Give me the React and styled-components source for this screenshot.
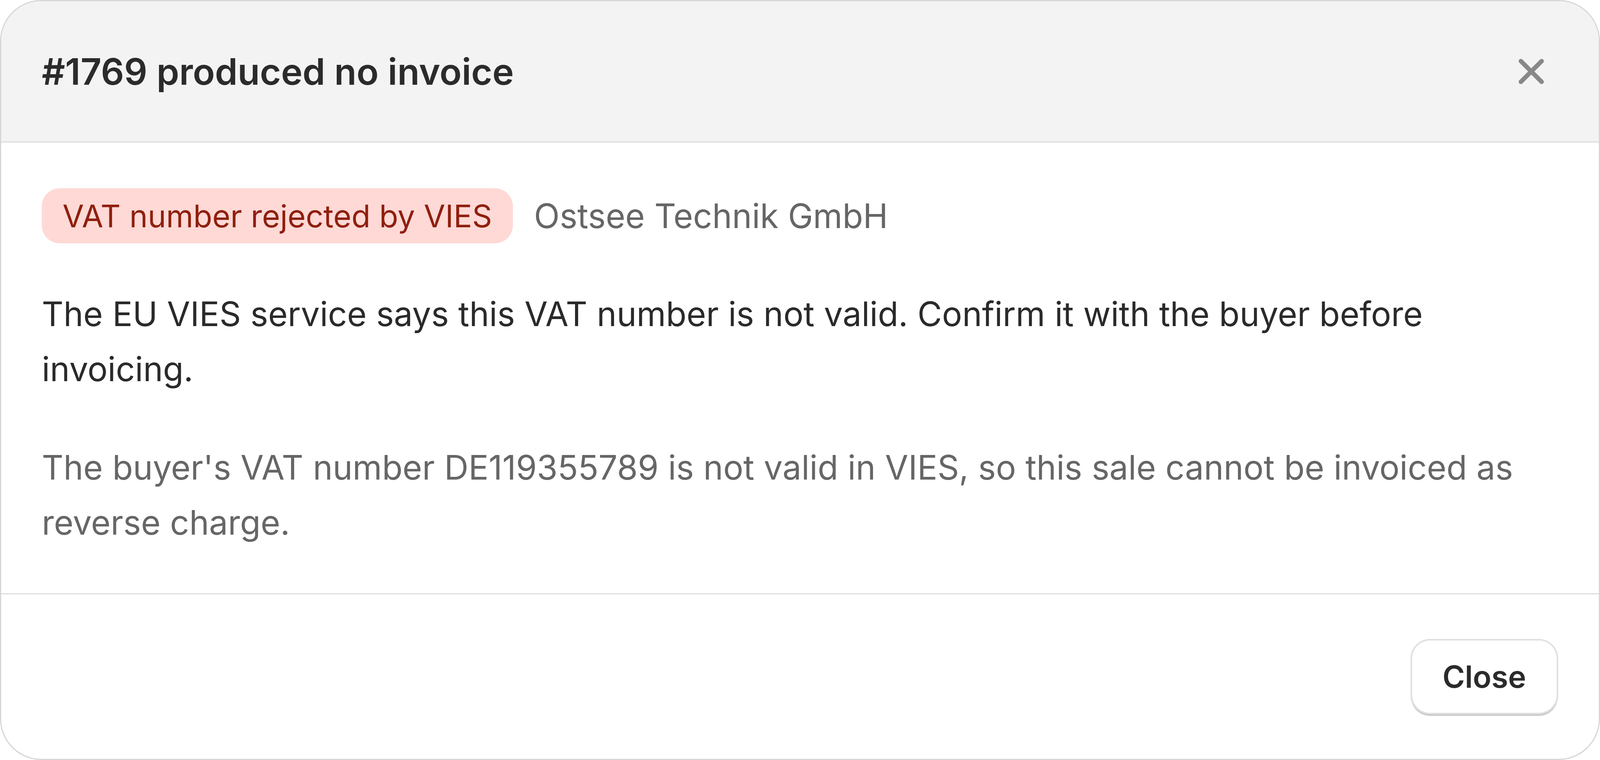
import React from 'react'
import styled, { createGlobalStyle } from 'styled-components'
import { X } from 'lucide-react'

const GlobalStyle = createGlobalStyle`
  html, body {
    margin: 0;
    padding: 0;
    height: 100%;
    background: #ffffff;
  }
  body {
    font-family: Inter, "Noto Sans", "Liberation Sans", sans-serif;
    color: #2b2b2b;
  }
  * {
    box-sizing: border-box;
  }
`

const Modal = styled.div`
  width: 100%;
  height: 100vh;
  display: flex;
  flex-direction: column;
  border: 3px solid #d6d6d6;
  border-radius: 106px;
  overflow: hidden;
  background: #ffffff;
`

const Header = styled.header`
  height: 362px;
  flex-shrink: 0;
  display: flex;
  align-items: center;
  justify-content: space-between;
  padding: 0 104px;
  background: #f3f3f3;
  border-bottom: 3px solid #dedede;
`

const Title = styled.h1`
  margin: 0;
  font-size: 93px;
  font-weight: 600;
  color: #2b2b2b;
`

const IconButton = styled.button`
  display: flex;
  align-items: center;
  justify-content: center;
  padding: 8px;
  margin-right: 8px;
  border: none;
  background: transparent;
  color: #888888;
  cursor: pointer;
`

const Body = styled.section`
  flex: 1;
  display: flex;
  flex-direction: column;
  gap: 111px;
  padding: 117px 104px 0;
  border-bottom: 3px solid #dedede;
`

const TagRow = styled.div`
  display: flex;
  align-items: center;
  gap: 54px;
`

const Badge = styled.span`
  display: inline-flex;
  align-items: center;
  height: 141px;
  padding: 0 53px;
  border-radius: 46px;
  background: #fed9d6;
  color: #8f1f0e;
  font-size: 79.5px;
`

const Company = styled.span`
  font-size: 86px;
  color: #666666;
`

const Text = styled.p`
  margin: 0;
  font-size: 86px;
  line-height: 141px;
  color: ${(p) => (p.$muted ? '#666666' : '#2a2a2a')};
`

const Footer = styled.footer`
  height: 421px;
  flex-shrink: 0;
  display: flex;
  align-items: center;
  justify-content: flex-end;
  padding: 0 104px;
`

const Button = styled.button`
  height: 193px;
  padding: 0 78px;
  border: 4px solid #e0e0e0;
  border-radius: 50px;
  background: #ffffff;
  box-shadow: 0 5px 2px -1px rgba(0, 0, 0, 0.22);
  font-family: inherit;
  font-size: 78px;
  font-weight: 600;
  color: #2b2b2b;
  cursor: pointer;
`

export default function App() {
  return (
    <>
      <GlobalStyle />
      <Modal>
        <Header>
          <Title>#1769 produced no invoice</Title>
          <IconButton aria-label="Close">
            <X size={106} strokeWidth={2.6} />
          </IconButton>
        </Header>
        <Body>
          <TagRow>
            <Badge>VAT number rejected by VIES</Badge>
            <Company>Ostsee Technik GmbH</Company>
          </TagRow>
          <Text>
            The EU VIES service says this VAT number is not valid. Confirm it with the buyer before invoicing.
          </Text>
          <Text $muted>
            The buyer's VAT number DE119355789 is not valid in VIES, so this sale cannot be invoiced as reverse charge.
          </Text>
        </Body>
        <Footer>
          <Button>Close</Button>
        </Footer>
      </Modal>
    </>
  )
}
